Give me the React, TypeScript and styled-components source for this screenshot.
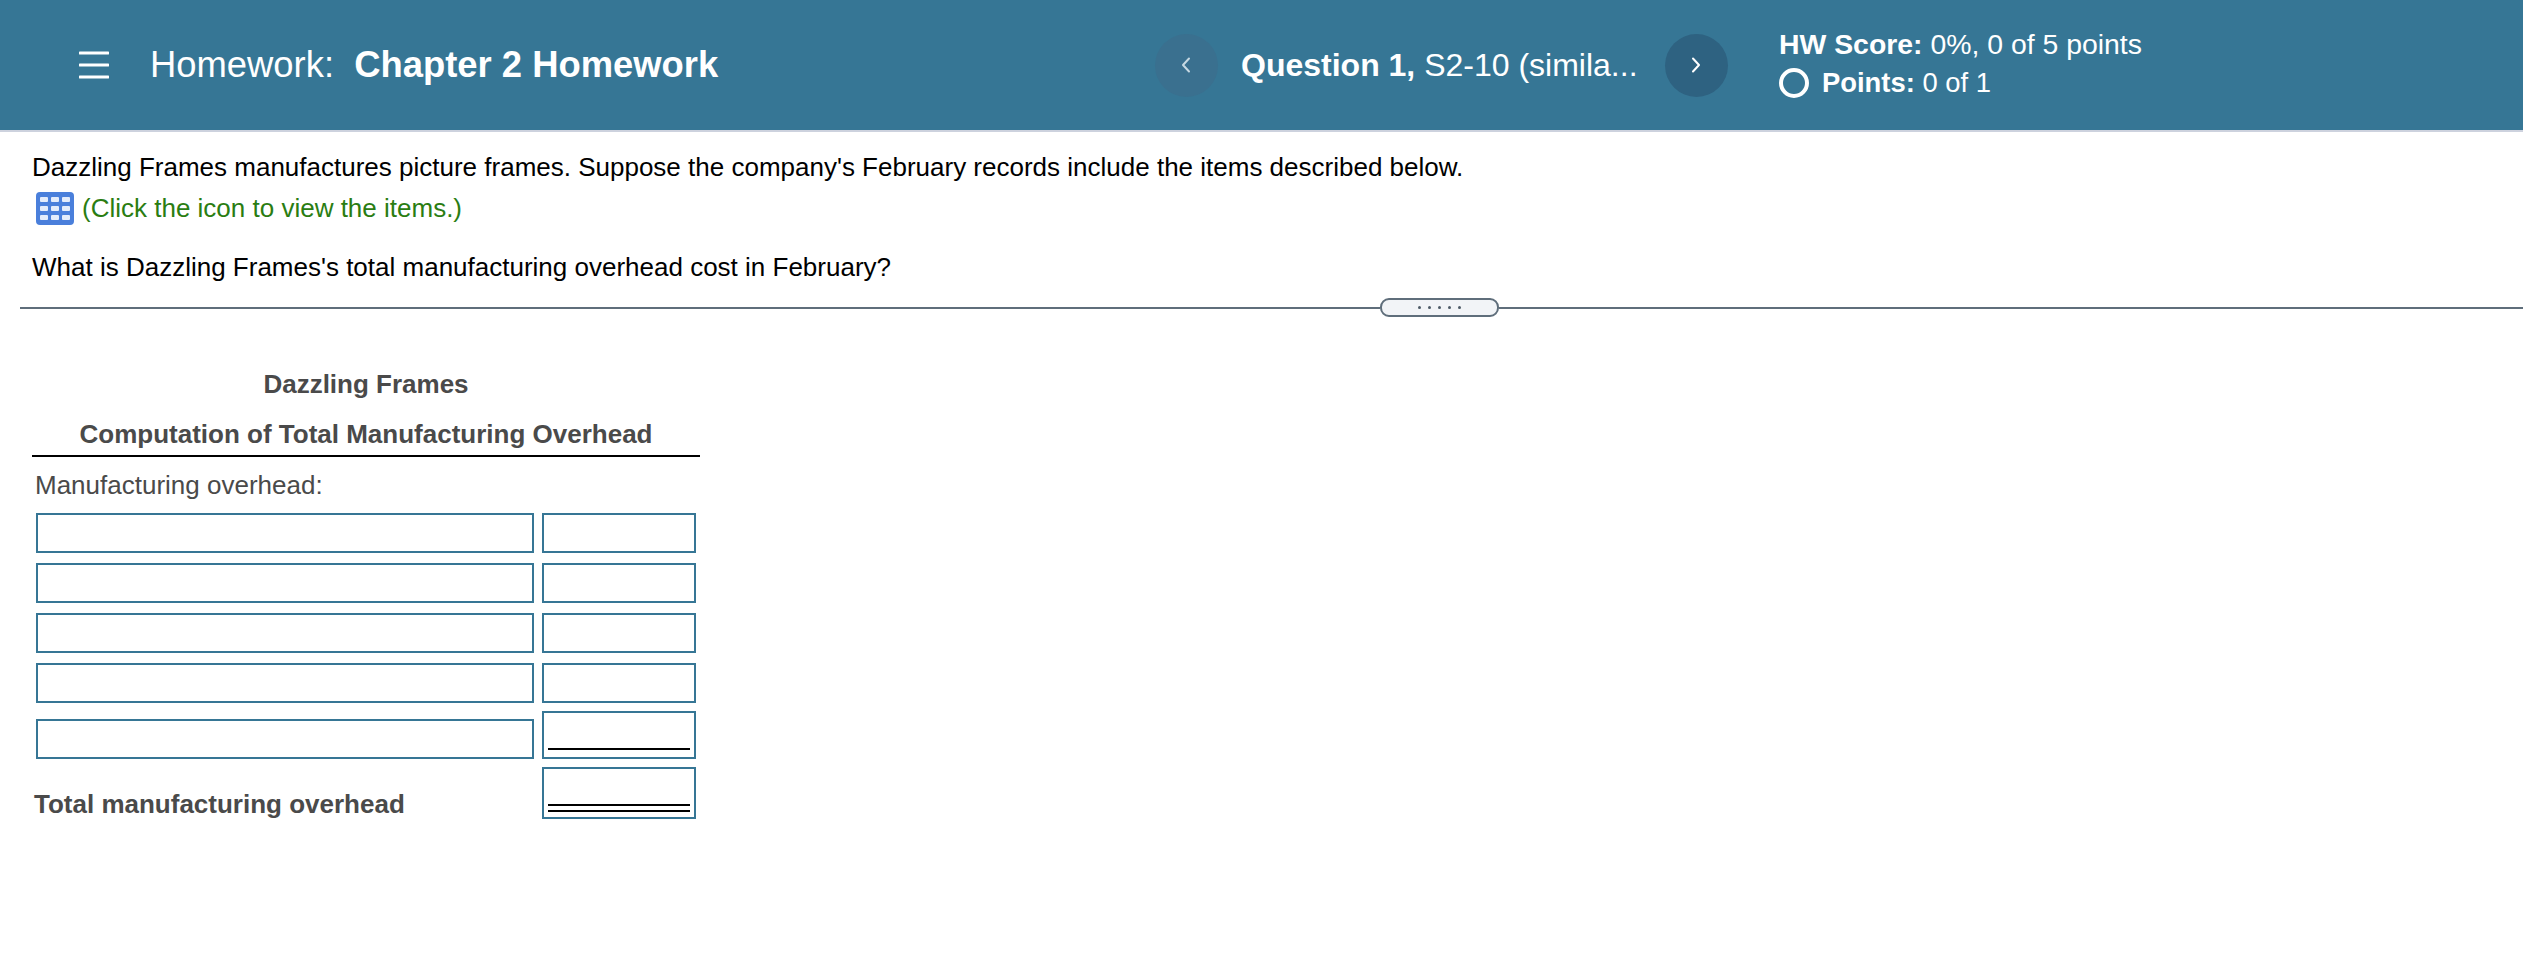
import React from "react";
import styled, { createGlobalStyle } from "styled-components";

const GlobalStyle = createGlobalStyle`
  html, body {
    margin: 0;
    padding: 0;
    background: #fff;
    font-family: "Liberation Sans", Arial, sans-serif;
  }
`;

const Page = styled.div`
  width: 2523px;
  height: 963px;
  overflow: hidden;
`;

const Header = styled.header`
  display: flex;
  align-items: center;
  height: 130px;
  background: #367695;
  border-bottom: 2px solid #cdd2de;
  color: #fff;
`;

const MenuIcon = styled.svg`
  width: 30px;
  height: 28px;
  margin-left: 79px;
  flex: none;
`;

const Title = styled.h1`
  width: 1005px;
  margin: 0 0 0 41px;
  font-size: 36.4px;
  font-weight: 400;
  white-space: pre;
  flex: none;
  b {
    font-weight: 700;
  }
`;

const NavButton = styled.button<{ $active?: boolean }>`
  display: flex;
  align-items: center;
  justify-content: center;
  width: 63px;
  height: 63px;
  padding: 0 2px 0 0;
  flex: none;
  border: none;
  border-radius: 50%;
  background: ${({ $active }) => ($active ? "#2e6281" : "#3a708f")};
  color: ${({ $active }) => ($active ? "#fff" : "#c6d8e2")};
`;

const QuestionTitle = styled.div`
  width: 424px;
  margin-left: 23px;
  flex: none;
  font-size: 32px;
  white-space: nowrap;
  b {
    font-weight: 700;
  }
`;

const Score = styled.div`
  display: flex;
  flex-direction: column;
  gap: 9px;
  margin-left: 51px;
  padding-bottom: 3px;
  font-size: 28.4px;
  line-height: 30px;
  b {
    font-weight: 700;
  }
`;

const PointsRow = styled.div`
  display: flex;
  align-items: center;
  gap: 13px;
  font-size: 27.4px;
`;

const Ring = styled.span`
  width: 30px;
  height: 30px;
  box-sizing: border-box;
  border: 4px solid #fff;
  border-radius: 50%;
`;

const Question = styled.section`
  padding: 18px 0 0 32px;
  font-size: 26px;
  line-height: 34px;
  color: #000;
`;

const Prompt = styled.p<{ $gap?: number }>`
  margin: ${({ $gap }) => $gap ?? 0}px 0 0;
`;

const LinkLine = styled.div`
  display: flex;
  align-items: center;
  gap: 8px;
  margin: 7px 0 0 4px;
  height: 34px;
  color: #2a7d12;
`;

const Divider = styled.div`
  display: flex;
  align-items: center;
  margin: 14px 0 0 20px;
  height: 19px;
`;

const DividerLine = styled.span<{ $grow?: boolean }>`
  height: 2px;
  background: #5f6e7b;
  flex: ${({ $grow }) => ($grow ? "1" : "none")};
  width: ${({ $grow }) => ($grow ? "auto" : "1360px")};
`;

const Handle = styled.div`
  display: flex;
  align-items: center;
  justify-content: center;
  gap: 7px;
  width: 119px;
  height: 19px;
  box-sizing: border-box;
  flex: none;
  border: 2px solid #5f6e7b;
  border-radius: 9px;
  background: #f2f4f7;
`;

const Dot = styled.i`
  width: 3px;
  height: 3px;
  border-radius: 50%;
  background: #4d5a66;
`;

const Sheet = styled.section`
  width: 668px;
  margin: 50px 0 0 32px;
  color: #4a4a4a;
  font-size: 26px;
`;

const SheetHeading = styled.div`
  font-weight: 700;
  text-align: center;
  line-height: 34px;
  height: 50px;
`;

const SheetHeadingLast = styled(SheetHeading)`
  height: 38px;
  border-bottom: 2px solid #000;
`;

const SectionLabel = styled.div`
  margin: 11px 0 9px 3px;
  line-height: 35px;
`;

const Rows = styled.div`
  padding: 0 4px;
`;

const Row = styled.div<{ $gap?: number }>`
  display: flex;
  align-items: flex-end;
  gap: 8px;
  margin-top: ${({ $gap }) => $gap ?? 10}px;
`;

const FieldInput = styled.input<{ $wide?: boolean }>`
  width: ${({ $wide }) => ($wide ? "498px" : "154px")};
  height: 40px;
  padding: 0 6px;
  box-sizing: border-box;
  flex: none;
  border: 2px solid #367695;
  border-radius: 0;
  background: #fff;
  font: inherit;
`;

const SumField = styled.div<{ $height: number; $pad: number }>`
  display: flex;
  flex-direction: column;
  justify-content: flex-end;
  gap: 4px;
  width: 154px;
  height: ${({ $height }) => $height}px;
  box-sizing: border-box;
  flex: none;
  padding: 0 4px ${({ $pad }) => $pad}px;
  border: 2px solid #367695;
`;

const SumRule = styled.span`
  height: 2px;
  background: #000;
`;

const TotalLabel = styled.div`
  flex: 1;
  margin-left: -2px;
  line-height: 30px;
  font-weight: 700;
`;

const TableIcon = () => (
  <svg width="38" height="33" viewBox="0 0 38 33" style={{ flex: "none" }}>
    <rect width="38" height="33" rx="4" fill="#4a7fdb" />
    {[5, 14, 23].map((y) =>
      [4, 15, 26].map((x) => (
        <rect key={`${x}-${y}`} x={x} y={y} width="8" height="5" rx="1" fill="#e4ecfb" />
      ))
    )}
  </svg>
);

const Chevron = ({ flip }: { flip?: boolean }) => (
  <svg width="12" height="18" viewBox="0 0 12 18" fill="none">
    <path
      d={flip ? "M3 2.5L9 9l-6 6.5" : "M9 2.5L3 9l6 6.5"}
      stroke="currentColor"
      strokeWidth="2"
      strokeLinecap="round"
      strokeLinejoin="round"
    />
  </svg>
);

const App: React.FC = () => {
  return (
    <Page>
      <GlobalStyle />
      <Header>
        <MenuIcon viewBox="0 0 30 28">
          <path d="M1 2h28M1 14h28M1 26h28" stroke="#fff" strokeWidth="3" strokeLinecap="round" />
        </MenuIcon>
        <Title>
          {"Homework:  "}
          <b>Chapter 2 Homework</b>
        </Title>
        <NavButton aria-label="Previous question">
          <Chevron />
        </NavButton>
        <QuestionTitle>
          <b>Question 1,</b> S2-10 (simila...
        </QuestionTitle>
        <NavButton $active aria-label="Next question">
          <Chevron flip />
        </NavButton>
        <Score>
          <div>
            <b>HW Score:</b> 0%, 0 of 5 points
          </div>
          <PointsRow>
            <Ring />
            <span>
              <b>Points:</b> 0 of 1
            </span>
          </PointsRow>
        </Score>
      </Header>

      <Question>
        <Prompt>
          Dazzling Frames manufactures picture frames. Suppose the company's February records
          include the items described below.
        </Prompt>
        <LinkLine>
          <TableIcon />
          (Click the icon to view the items.)
        </LinkLine>
        <Prompt $gap={25}>What is Dazzling Frames's total manufacturing overhead cost in February?</Prompt>
      </Question>

      <Divider>
        <DividerLine />
        <Handle>
          {[0, 1, 2, 3, 4].map((i) => (
            <Dot key={i} />
          ))}
        </Handle>
        <DividerLine $grow />
      </Divider>

      <Sheet>
        <SheetHeading>Dazzling Frames</SheetHeading>
        <SheetHeadingLast>Computation of Total Manufacturing Overhead</SheetHeadingLast>
        <SectionLabel>Manufacturing overhead:</SectionLabel>
        <Rows>
          {[0, 1, 2, 3].map((i) => (
            <Row key={i}>
              <FieldInput $wide />
              <FieldInput />
            </Row>
          ))}
          <Row $gap={8}>
            <FieldInput $wide />
            <SumField $height={48} $pad={7}>
              <SumRule />
            </SumField>
          </Row>
          <Row $gap={8}>
            <TotalLabel>Total manufacturing overhead</TotalLabel>
            <SumField $height={52} $pad={5}>
              <SumRule />
              <SumRule />
            </SumField>
          </Row>
        </Rows>
      </Sheet>
    </Page>
  );
};

export default App;
